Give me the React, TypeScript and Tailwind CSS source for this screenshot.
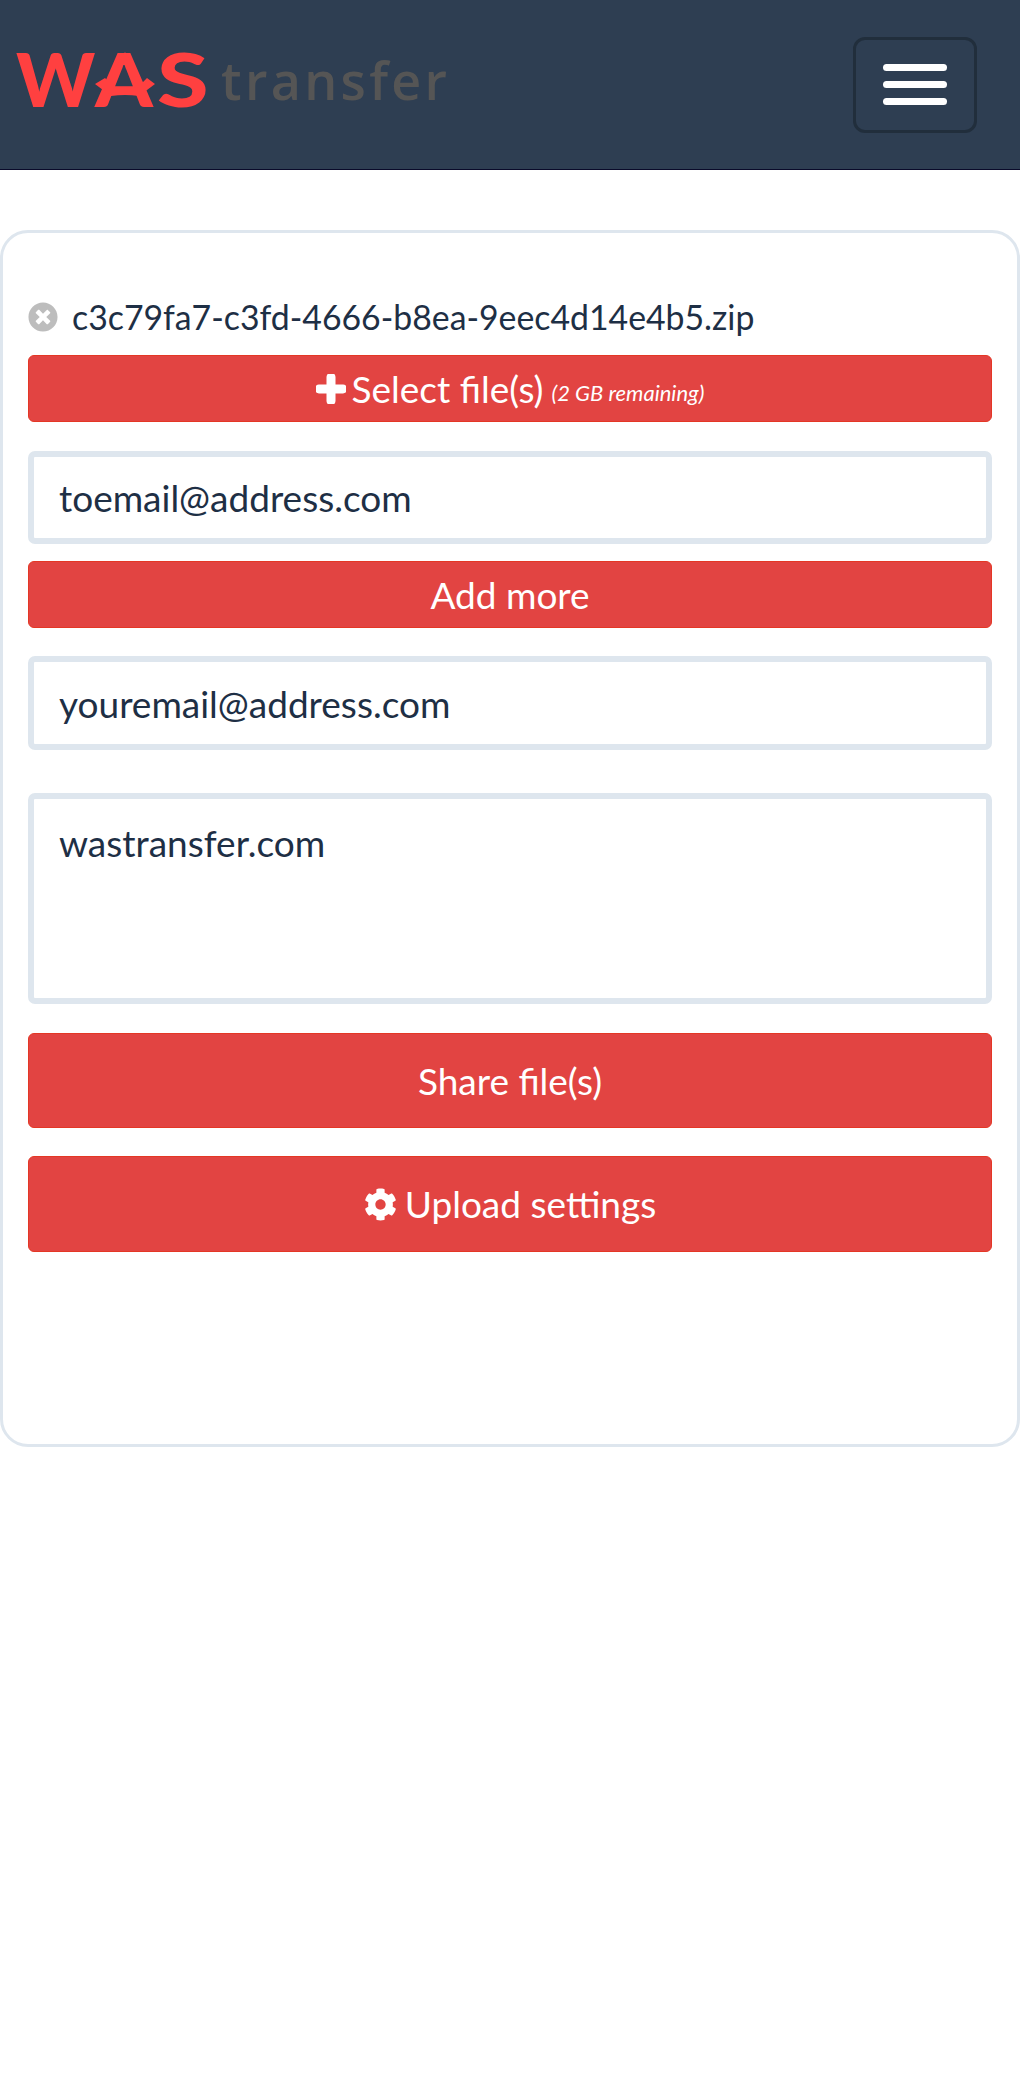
import React from "react";
import { FaCog, FaTimesCircle } from "react-icons/fa";

const Logo = () => (
  <svg width="450" height="100" viewBox="0 0 450 100" className="block overflow-visible" style={{ fontFamily: "Lato, sans-serif" }}>
    <text x="-1" y="72" fontSize="75" fontWeight="900" fill="#ff4040">W</text>
    <text transform="translate(78 72) scale(1.1 1)" fontSize="75" fontWeight="900" fill="#ff4040">A</text>
    {/* star arms and tip on the A */}
    <path d="M108 17 L100 30 L116 30 Z M88 43 L98 53 Q108 51 120 53 L130 43 L138 49 L122 61 Q108 59 94 61 L78 49 Z" fill="#ff4040" />
    <text transform="translate(140 72) scale(1.25 1)" fontSize="75" fontWeight="900" fill="#ff4040">S</text>
    <text x="204" y="65" fontSize="52" fontWeight="600" textLength={226} lengthAdjust="spacing" fill="#555555" style={{ fontFamily: "'Open Sans', sans-serif" }}>transfer</text>
  </svg>
);

const PlusIcon = () => (
  <svg width="30" height="30" viewBox="0 0 30 30" className="mr-[6px]">
    <path d="M15 3 V27 M3 15 H27" stroke="currentColor" strokeWidth="9" strokeLinecap="round" fill="none" />
  </svg>
);

const Btn = ({ children, className }: { children: React.ReactNode; className: string }) => (
  <button className={"w-full flex items-center justify-center rounded-md border border-[#e43725] bg-[#e24442] text-white " + className}>
    {children}
  </button>
);

const inputCls = "block w-full rounded-[7px] border-[6px] border-[#dee6ee] bg-white px-[25px] text-[37px] text-[#1e2f45]";

export default function App() {
  return (
    <div className="min-h-[2097px] bg-white font-['Lato',sans-serif]">
      <header className="flex h-[170px] items-center justify-between border-b border-[#0a0a2a] bg-[#2e3e52] pl-[17px] pr-[43px]">
        <Logo />
        <button className="flex h-[96px] w-[124px] flex-col items-center justify-center gap-[10px] rounded-xl border-[3px] border-[#212e3c]">
          <span className="h-[7px] w-[64px] rounded-full bg-white" />
          <span className="h-[7px] w-[64px] rounded-full bg-white" />
          <span className="h-[7px] w-[64px] rounded-full bg-white" />
        </button>
      </header>

      <main className="mt-[60px] h-[1217px] rounded-[28px] border-[3px] border-[#dee6ee] px-[25px] pt-[64px]">
        <div className="flex h-[40px] items-center text-[33.8px] text-[#1e2f45]">
          <FaTimesCircle className="mr-[14px] text-[30px] text-[#bdbdbd]" />
          <span>c3c79fa7-c3fd-4666-b8ea-9eec4d14e4b5.zip</span>
        </div>
        <Btn className="mt-[18px] h-[67px] text-[37px]">
          <PlusIcon />
          <span>Select file(s)</span>
          <em className="ml-[8px] mt-[8px] text-[22px]">(2 GB remaining)</em>
        </Btn>

        <input readOnly value="toemail@address.com" className={inputCls + " mt-[29px] h-[93px]"} />
        <Btn className="mt-[17px] h-[67px] text-[37px]">Add more</Btn>
        <input readOnly value="youremail@address.com" className={inputCls + " mt-[28px] h-[94px]"} />
        <textarea readOnly value="wastransfer.com" className={inputCls + " mt-[43px] h-[211px] resize-none py-[22px] leading-[44px]"} />

        <Btn className="mt-[29px] h-[95px] text-[37px]">Share file(s)</Btn>
        <Btn className="mt-[28px] h-[96px] text-[37px]">
          <FaCog className="mr-[8px] text-[33px]" />
          Upload settings
        </Btn>
      </main>
    </div>
  );
}
